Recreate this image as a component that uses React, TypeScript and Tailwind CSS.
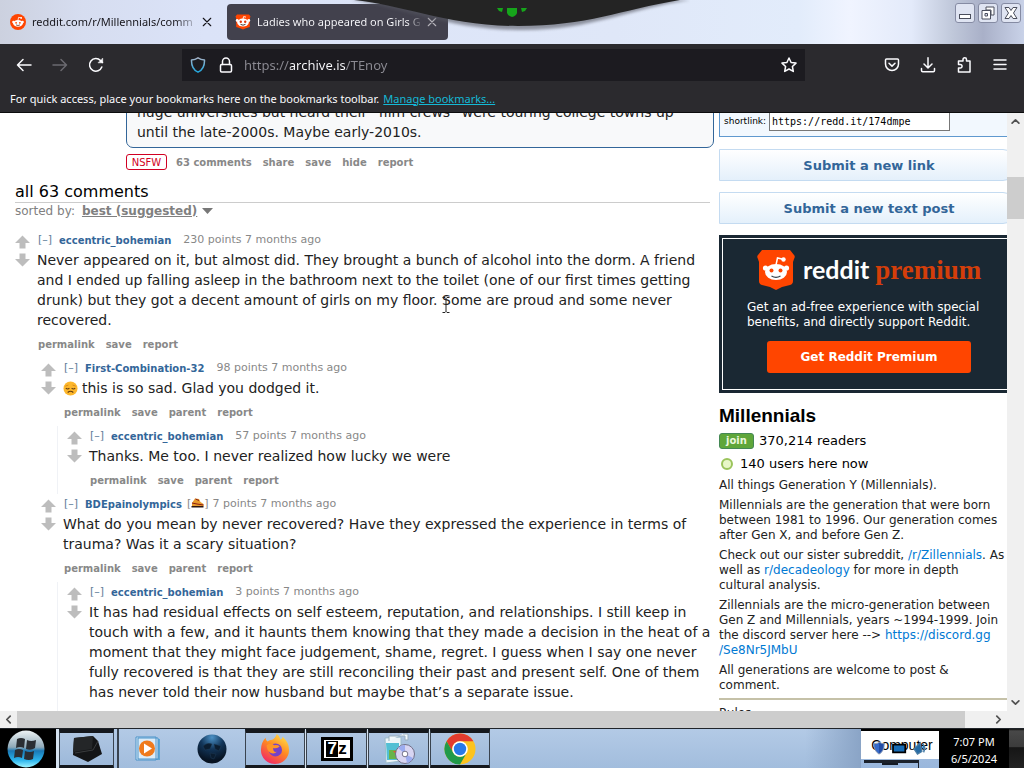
import React from 'react';

type IconProps = { className?: string };

const Snoo = ({ className = 'size-4' }: IconProps) => (
  <svg viewBox="0 0 16 16" className={className} aria-hidden="true">
    <circle cx="8" cy="8" r="8" fill="#ff4500" />
    <ellipse cx="8" cy="9.3" rx="4.9" ry="3.4" fill="#fff" />
    <circle cx="3.4" cy="8" r="1.2" fill="#fff" />
    <circle cx="12.6" cy="8" r="1.2" fill="#fff" />
    <path d="M8 6 8.6 3.3 11 3.8" stroke="#fff" strokeWidth=".8" fill="none" />
    <circle cx="11.2" cy="3.9" r=".9" fill="#fff" />
    <circle cx="6.1" cy="8.8" r=".9" fill="#ff4500" />
    <circle cx="9.9" cy="8.8" r=".9" fill="#ff4500" />
    <path d="M6 10.9q2 1.3 4 0" stroke="#552211" strokeWidth=".7" fill="none" />
  </svg>
);

const SnooShield = () => (
  <svg viewBox="0 0 16 16" className="size-4" aria-hidden="true">
    <path d="M2 .5h12l1.500 2-.7 2V13l-4 1.300L8 15.500l-2.800-1.200L1.200 13V4.500L.5 2.500z" fill="#ff4500" />
    <ellipse cx="8" cy="8.500" rx="5.800" ry="4" fill="#fff" />
    <circle cx="2.200" cy="6.500" r="1.400" fill="#fff" />
    <circle cx="13.800" cy="6.500" r="1.400" fill="#fff" />
    <path d="M8 5 8.600 2.600 11 3.100" stroke="#fff" strokeWidth=".9" fill="none" />
    <circle cx="5.800" cy="7.700" r="1.200" fill="#e0340a" />
    <circle cx="10.200" cy="7.700" r="1.200" fill="#e0340a" />
    <path d="M5.500 10.300q2.500 1.800 5 0" stroke="#33221c" strokeWidth=".9" fill="none" />
  </svg>
);

const Line = ({ children, className = 'size-4', w = 1.5 }: { children: React.ReactNode; className?: string; w?: number }) => (
  <svg viewBox="0 0 16 16" className={className} fill="none" stroke="currentColor" strokeWidth={w} strokeLinecap="round" strokeLinejoin="round" aria-hidden="true">
    {children}
  </svg>
);

const CloseX = () => (
  <Line className="size-3" w={1.5}>
    <path d="M3 3l10 10M13 3 3 13" />
  </Line>
);

const WindowButton = ({ label, children }: { label: string; children: React.ReactNode }) => (
  <button aria-label={label} className="flex h-5 w-5 items-center justify-center rounded-[3px] border border-[#858ba3] bg-[#dfe4f2]">
    <svg viewBox="0 0 16 16" className="size-4" aria-hidden="true">{children}</svg>
  </button>
);

function TabStrip() {
  return (
    <header className="relative flex h-11 shrink-0 items-start overflow-hidden bg-[linear-gradient(90deg,#ccd1df_0%,#d6ddf0_8%,#dbe3f8_20%,#dfe7f8_60%,#e2ecfb_78%,#f0f4ff_83%,#e3eafa_89%,#c0c8da_93%,#a9b0c8_96%,#c9d2e8_100%)]">
      <div className="flex h-11 w-[223px] items-center pl-[10px] text-[#15141a]">
        <Snoo />
        <span className="ml-[6px] w-[168px] overflow-hidden whitespace-nowrap bg-[linear-gradient(90deg,#15141a_85%,transparent)] bg-clip-text text-[11px] text-transparent">reddit.com/r/Millennials/comm</span>
        <button aria-label="Close tab" className="ml-px"><CloseX /></button>
      </div>
      <div className="mt-1 ml-1 flex h-9 w-[221px] items-center rounded-[4px] bg-[#42414d] pl-2 text-[#fbfbfe]">
        <SnooShield />
        <span className="ml-[6px] w-[167px] overflow-hidden whitespace-nowrap bg-[linear-gradient(90deg,#fbfbfe_90%,transparent_99%)] bg-clip-text text-[11px] text-transparent">Ladies who appeared on Girls G</span>
        <button aria-label="Close tab" className="ml-[2px] text-[#b5b3ba]"><CloseX /></button>
      </div>
      <svg viewBox="0 0 340 34" className="absolute top-0 left-[350px] h-[34px] w-[340px]" aria-hidden="true">
        <defs><filter id="soft" x="-5%" y="-20%" width="110%" height="150%"><feGaussianBlur stdDeviation="1.5" /></filter></defs>
        <path d="M0 0C50 6 95 29 168 30S280 8 340 0Z" fill="#555661" opacity=".6" filter="url(#soft)" />
        <path d="M4 0C50 4 98 26 168 26S270 10 330 0Z" fill="#242424" />
        <path d="M147 8h6l-1 4-3-1zM157 8h10v5q-1 3-5 4-4-1-5-4zM171 8h6l-2 3-3 1z" fill="#16a51b" />
      </svg>
      <div className="ml-auto flex gap-[3px] pt-[3px] pr-[3px]">
        <WindowButton label="Minimize"><rect x="2.5" y="9.5" width="11" height="4" fill="#fff" stroke="#4a4e5c" /></WindowButton>
        <WindowButton label="Restore">
          <path d="M6 2h8v8h-3V5H6z" fill="#fff" stroke="#4a4e5c" />
          <path d="M2 5.500h8.500v8.500H2zM5 8.500h2.500V11H5z" fill="#fff" fillRule="evenodd" stroke="#4a4e5c" />
        </WindowButton>
        <WindowButton label="Close"><path d="M2 2.500h4l2 3 2-3h4L10.500 8l3.500 5.500h-4l-2-3-2 3H2L5.500 8z" fill="#fff" stroke="#4a4e5c" /></WindowButton>
      </div>
    </header>
  );
}

function Toolbar() {
  return (
    <div className="shrink-0 bg-[#2b2a2e] text-[#fbfbfe]">
      <div className="flex h-[42px] items-center pl-4">
        <button aria-label="Back"><Line><path d="M15 8H1.500M7 2.500 1.500 8 7 13.500" /></Line></button>
        <button aria-label="Forward" className="ml-5 text-[#6b6a70]"><Line><path d="M1 8h13.500M9 2.500 14.500 8 9 13.500" /></Line></button>
        <button aria-label="Reload" className="ml-5">
          <Line><path d="M13.800 10A6.300 6.300 0 1 1 12.500 3.600L14.500 5.500" /><path d="M14.700 1.500v4.300h-4.300z" fill="currentColor" strokeWidth=".6" /></Line>
        </button>
        <div className="ml-[78px] flex h-8 min-w-0 flex-1 items-center bg-[#1c1b20] px-2">
          <svg viewBox="0 0 16 16" className="size-4 shrink-0" fill="none" aria-hidden="true">
            <defs><linearGradient id="sh" x2="0" y2="1"><stop stopColor="#a5b3c8" /><stop offset="1" stopColor="#1fa7df" /></linearGradient></defs>
            <path d="M8 .8C6 2.200 3.500 2.800 1.500 2.900 1.300 9 3.500 13 8 15.200 12.500 13 14.700 9 14.500 2.900 12.500 2.800 10 2.200 8 .8z" stroke="url(#sh)" strokeWidth="1.500" strokeLinejoin="round" />
          </svg>
          <Line className="ml-3 size-4 shrink-0"><rect x="2.500" y="7.500" width="11" height="7.500" rx="1.200" /><path d="M4.500 7.500V4.500a3.500 3.500 0 0 1 7 0v3" /></Line>
          <input aria-label="Address" defaultValue="https://archive.is/TEnoy" className="ml-[10px] h-6 min-w-0 flex-1 bg-[linear-gradient(90deg,#8c8b93_46px,#fbfbfe_46px,#fbfbfe_102px,#8c8b93_102px)] bg-clip-text text-[13px] text-transparent outline-none" />
          <button aria-label="Bookmark this page"><Line><path d="m8 1 2.100 4.500 4.900.6-3.600 3.400.9 4.900L8 12l-4.300 2.400.9-4.900L1 6.100l4.900-.6z" /></Line></button>
        </div>
        <div className="ml-[79px] flex gap-5 pr-4">
          <button aria-label="Pocket"><Line><path d="M2.500 2h11q1 0 1 1v4a6.500 6.500 0 0 1-13 0V3q0-1 1-1z" /><path d="m5 6.200 3 2.900 3-2.900" /></Line></button>
          <button aria-label="Downloads"><Line><path d="M8 .8v10M4 7l4 4 4-4M1.500 11.500v2q0 1.200 1.200 1.200h10.600q1.200 0 1.200-1.200v-2" /></Line></button>
          <button aria-label="Extensions"><Line><path d="M2.500 15v-4h1.800a1.700 1.700 0 0 0 0-3.500H2.500V4H7V2.500a1.700 1.700 0 0 1 3.500 0V4H14v11z" /></Line></button>
          <button aria-label="Menu"><Line><path d="M2 3h12M2 7.500h12M2 12h12" /></Line></button>
        </div>
      </div>
      <div className="flex h-[27px] items-center border-b border-[#0c0c0d] pl-[10px] text-[11px] whitespace-nowrap">
        For quick access, place your bookmarks here on the bookmarks toolbar.
        <a href="#" className="ml-1 text-[#14b9d6] underline">Manage bookmarks...</a>
      </div>
    </div>
  );
}

const Arrow = ({ down = false }: { down?: boolean }) => (
  <svg viewBox="0 0 15 14" className={down ? 'h-[14px] w-[15px] rotate-180' : 'h-[14px] w-[15px]'} aria-hidden="true">
    <path d="M7.500.5 15 8h-4.500v5.500h-6V8H0z" fill="#bdbdbd" />
  </svg>
);

const SadFace = () => (
  <svg viewBox="0 0 16 16" className="mr-1 inline-block size-[15px] align-[-3px]" role="img" aria-label="disappointed face">
    <circle cx="8" cy="8" r="7.500" fill="#fdb72c" />
    <path d="M2.500 5.500 5.800 4.300M13.500 5.500l-3.300-1.200" stroke="#d98a17" fill="none" />
    <path d="M3 7.800q2 1.400 3.800 0M9.200 7.800q2 1.400 3.800 0M5 12.300q3-2.800 6 0" stroke="#603a10" strokeWidth="1.200" fill="none" />
  </svg>
);

const Shoe = () => (
  <svg viewBox="0 0 13 10" className="inline-block h-[10px] w-[13px] align-[-1px]" role="img" aria-label="hiking boot">
    <path d="M4 .5 8 1l1.500 3 3 2v2H1V5z" fill="#e89a2c" />
    <path d="M1 5 6 6l6.500 1M4.500 1 8 2.500" stroke="#8b1e14" strokeWidth="1" fill="none" />
    <path d="M.5 8h12v1.500H.5z" fill="#2b1510" />
  </svg>
);

const Actions = ({ items }: { items: string[] }) => (
  <div className="flex h-5 items-center gap-[11px] text-[10px] font-bold text-[#888]">
    {items.map((i) => <a href="#" key={i}>{i}</a>)}
  </div>
);

type CommentProps = { user: string; meta: string; flair?: boolean; lines: React.ReactNode[]; indent: string; top?: boolean };

function Comment({ user, meta, flair, lines, indent, top }: CommentProps) {
  return (
    <article className={`flex gap-[7px] pb-1 ${indent}`}>
      <div className="flex w-[15px] shrink-0 flex-col gap-1 pt-[5px]">
        <button aria-label="upvote"><Arrow /></button>
        <button aria-label="downvote"><Arrow down /></button>
      </div>
      <div className="whitespace-nowrap">
        <div className="flex h-5 items-center pl-px text-[11px] text-[#888]">
          <a href="#" className="w-[21px] text-[#5f7d99]">[–]</a>
          <a href="#" className="text-[10px] font-bold text-[#336699]">{user}</a>
          {flair ? <span className="mr-1 ml-[5px]">[<Shoe />]</span> : <span className="w-3" />}
          <span>{meta}</span>
        </div>
        <p className="text-[14px] leading-5 text-[#222]">
          {lines.map((l, i) => <span key={i} className="block">{l}</span>)}
        </p>
        <div className="mt-1 pl-px"><Actions items={top ? ['permalink', 'save', 'report'] : ['permalink', 'save', 'parent', 'report']} /></div>
      </div>
    </article>
  );
}

function Thread() {
  return (
    <main className="relative min-w-0 flex-1">
      <div className="-mt-5 ml-[126px] h-[55px] rounded-[7px] border border-[#369] bg-[#f8f9fa] pt-2 pl-[10px] text-[14px] leading-5 whitespace-nowrap text-[#222]">
        huge universities but heard their “film crews” were touring college towns up<br />until the late-2000s. Maybe early-2010s.
      </div>
      <div className="mt-1 ml-[126px] flex items-center gap-[9px]">
        <span className="flex h-4 w-[41px] items-center justify-center rounded-[3px] border border-[#d10023] text-[10px] text-[#d10023]">NSFW</span>
        <Actions items={['63 comments', 'share', 'save', 'hide', 'report']} />
      </div>
      <div className="mt-2 mr-1 ml-[15px] h-[23px] border-b border-[#ccc] text-[16px] leading-6 text-black">all 63 comments</div>
      <div className="ml-[15px] flex h-4 items-center text-[12px] text-[#808080]">
        sorted by:
        <button className="ml-[7px] flex items-center font-bold"><span className="underline">best (suggested)</span>
          <svg viewBox="0 0 11 6" className="ml-[5px] h-[6px] w-[11px]" aria-hidden="true"><path d="M0 0h11L5.500 6z" fill="#777" /></svg>
        </button>
      </div>
      <div className="mt-[11px]">
        <Comment top indent="pl-[15px]" user="eccentric_bohemian" meta="230 points 7 months ago" lines={['Never appeared on it, but almost did. They brought a bunch of alcohol into the dorm. A friend', 'and I ended up falling asleep in the bathroom next to the toilet (one of our first times getting', 'drunk) but they got a decent amount of girls on my floor. Some are proud and some never', 'recovered.']} />
        <Comment indent="pl-[41px]" user="First-Combination-32" meta="98 points 7 months ago" lines={[<><SadFace />this is so sad. Glad you dodged it.</>]} />
        <div className="ml-[57px] border-l border-[#f0f2f6]"><Comment indent="pl-[9px]" user="eccentric_bohemian" meta="57 points 7 months ago" lines={['Thanks. Me too. I never realized how lucky we were']} /></div>
        <Comment flair indent="pl-[41px]" user="BDEpainolympics" meta="7 points 7 months ago" lines={['What do you mean by never recovered? Have they expressed the experience in terms of', 'trauma? Was it a scary situation?']} />
        <div className="ml-[57px] border-l border-[#f0f2f6]"><Comment indent="pl-[9px]" user="eccentric_bohemian" meta="3 points 7 months ago" lines={['It has had residual effects on self esteem, reputation, and relationships. I still keep in', 'touch with a few, and it haunts them knowing that they made a decision in the heat of a', 'moment that they might face judgement, shame, regret. I guess when I say one never', 'fully recovered is that they are still reconciling their past and present self. One of them', 'has never told their now husband but maybe that’s a separate issue.']} /></div>
      </div>
      <svg viewBox="0 0 8 16" className="absolute top-[184px] left-[442px] h-4 w-2" aria-hidden="true"><path d="M.5.500H3l1 1 1-1h2.500M4 1.500v13M.5 15.500H3l1-1 1 1h2.500" stroke="#222" fill="none" /></svg>
    </main>
  );
}

const SubmitButton = ({ children }: { children: string }) => (
  <button className="mb-[11px] flex h-8 w-full items-center justify-center rounded-r-[16px] border border-[#c4dbf1] bg-linear-to-b from-white to-[#e4f0fb] pt-px text-[13px] font-bold text-[#369]">{children}</button>
);

const PremiumBadge = () => (
  <svg viewBox="0 0 38 40" className="h-10 w-[38px]" aria-hidden="true">
    <path d="M5 0h28l4 5q1.500 1.500 0 4l-1 3v19q0 3-3 4l-8 2-6 3-6-3-8-2q-3-1-3-4V12L1 9Q-.5 6.500 1 5z" fill="#ff4500" />
    <ellipse cx="19" cy="22" rx="11" ry="8" fill="#fff" />
    <circle cx="8.500" cy="18" r="2.600" fill="#fff" /><circle cx="29.500" cy="18" r="2.600" fill="#fff" />
    <path d="M19 15l1.500-7 5.500 1.300" stroke="#fff" strokeWidth="1.500" fill="none" />
    <circle cx="26.500" cy="9.500" r="2.200" fill="#fff" />
    <circle cx="14.500" cy="20.500" r="2" fill="#ff4500" /><circle cx="23.500" cy="20.500" r="2" fill="#ff4500" />
    <path d="M14.500 26q4.500 2.600 9 0" stroke="#33424c" strokeWidth="1.200" fill="none" />
  </svg>
);

function Sidebar() {
  return (
    <aside className="w-[293px] shrink-0 overflow-hidden pl-[5px]">
      <div className="w-[300px]">
        <div className="flex h-6 items-start border-b border-l border-[#5f99cf] bg-[#f2f8fe] pl-1">
          <label htmlFor="shortlink" className="w-[45px] text-[9px] leading-[16px] text-black">shortlink:</label>
          <input id="shortlink" readOnly defaultValue="https://redd.it/174dmpe" className="-mt-px h-[19px] w-[181px] border border-[#777] bg-white px-[2px] font-['DejaVu_Sans_Mono',monospace] text-[10px] text-black" />
        </div>
        <div className="mt-3">
          <SubmitButton>Submit a new link</SubmitButton>
          <SubmitButton>Submit a new text post</SubmitButton>
        </div>
        <section className="mt-[11px] h-[158px] bg-[#1a2833] p-[3px]">
          <div className="h-full border border-white pt-[11px] text-white">
            <div className="flex h-10 items-center pl-[34px]">
              <PremiumBadge />
              <span className="ml-2 font-[Lato,sans-serif] text-[25px] font-bold">reddit</span>
              <span className="ml-[6px] font-['Liberation_Serif',serif] text-[27px] font-bold text-[#d43e0a]">premium</span>
            </div>
            <p className="mt-[10px] pl-6 text-[12px] leading-[15px] whitespace-nowrap">Get an ad-free experience with special<br />benefits, and directly support Reddit.</p>
            <button className="mt-[11px] ml-11 h-8 w-[204px] rounded-[3px] bg-[#ff4500] text-[12px] font-bold">Get Reddit Premium</button>
          </div>
        </section>
        <h1 className="mt-[11px] font-['Liberation_Sans',sans-serif] text-[19px] leading-[24px] font-bold text-black">Millennials</h1>
        <div className="mt-[3px] flex h-5 items-center text-[13px] text-black">
          <button className="mr-[5px] h-4 w-[35px] rounded-[3px] border border-[#485] bg-[#5fa63a] text-[10px] leading-[14px] font-bold text-[#eaf7de]">join</button>
          370,214 readers
        </div>
        <div className="mt-[3px] flex h-5 items-center pl-[2px] text-[13px] text-black">
          <span className="mr-[7px] size-3 rounded-full border-2 border-[#9bc45c] bg-[#e8f7c8]" />140 users here now
        </div>
        <div className="mt-1 flex flex-col gap-[5px] text-[12px] leading-[15px] whitespace-nowrap text-[#222]">
          <p>All things Generation Y (Millennials).</p>
          <p>Millennials are the generation that were born<br />between 1981 to 1996. Our generation comes<br />after Gen X, and before Gen Z.</p>
          <p>Check out our sister subreddit, <a href="#" className="text-[#0079d3]">/r/Zillennials</a>. As<br />well as <a href="#" className="text-[#0079d3]">r/decadeology</a> for more in depth<br />cultural analysis.</p>
          <p>Zillennials are the micro-generation between<br />Gen Z and Millennials, years ~1994-1999. Join<br />the discord server here --&gt; <a href="#" className="text-[#0079d3]">https://discord.gg<br />/Se8Nr5JMbU</a></p>
          <p>All generations are welcome to post &amp;<br />comment.</p>
        </div>
        <hr className="mt-[5px] border-t-2 border-[#c5c1a8]" />
        <p className="mt-[6px] text-[12px] leading-[15px] text-[#222]">Rules</p>
      </div>
    </aside>
  );
}

const Chevron = ({ d }: { d: string }) => (
  <Line className="size-[9px]" w={3}><path d={d} /></Line>
);

function VerticalBar() {
  return (
    <div className="flex w-[17px] shrink-0 flex-col items-center bg-[#f0f0f0] text-[#505050]">
      <button aria-label="Scroll up" className="flex h-[17px] items-center"><Chevron d="M2 11l6-6 6 6" /></button>
      <div className="mt-[47px] h-[42px] w-full bg-[#cdcdcd]" />
      <button aria-label="Scroll down" className="mt-auto flex h-[17px] items-center"><Chevron d="M2 5l6 6 6-6" /></button>
    </div>
  );
}

function HorizontalBar() {
  return (
    <div className="flex h-[17px] shrink-0 bg-[#f0f0f0] pr-[17px] text-[#505050]">
      <button aria-label="Scroll left" className="flex w-[17px] items-center justify-center"><Chevron d="M11 2 5 8l6 6" /></button>
      <div className="flex-1 bg-[#cdcdcd]" />
      <button aria-label="Scroll right" className="ml-[25px] flex w-[17px] items-center justify-center"><Chevron d="M5 2l6 6-6 6" /></button>
    </div>
  );
}

const Task = ({ label, open = false, width, children }: { label: string; open?: boolean; width: string; children: React.ReactNode }) => (
  <button aria-label={label} className={`flex h-10 shrink-0 items-center justify-center ${width} ${open ? 'border-x border-t-4 border-b-4 border-x-[#39434f] border-y-[#15181d] bg-linear-to-b from-[#afc6e2] to-[#9db9da]' : ''}`}>
    {children}
  </button>
);

function Taskbar() {
  return (
    <footer className="flex h-10 shrink-0 overflow-hidden border-t border-[#20242a] bg-linear-to-b from-[#b3cae6] to-[#a2bddd]">
      <button aria-label="Start" className="flex h-10 w-[56px] items-center justify-center bg-black pr-1">
        <svg viewBox="0 0 38 38" className="size-[38px]" aria-hidden="true">
          <defs><linearGradient id="orb" x2="0" y2="1"><stop stopColor="#eef3f5" /><stop offset=".45" stopColor="#8fa9b8" /><stop offset=".55" stopColor="#1a78b4" /><stop offset=".8" stopColor="#2bb4ec" /><stop offset="1" stopColor="#9ff4ff" /></linearGradient></defs>
          <circle cx="19" cy="19" r="18.500" fill="url(#orb)" />
          <path d="M10 9q4-2 8 0l-1 9q-4-2-8 0zM20 10q4 2 9 0l-1 8q-4 3-9 1zM8 20q4-2 8 0l-1 8q-4-2-8 0zM18 21q5 2 9 0l-1 8q-4 2-9 0z" fill="#2b2e33" />
        </svg>
      </button>
      <div className="flex gap-px bg-[#d5e2f0] pl-[3px]">
        <Task label="Computer" open width="w-[55px]">
          <svg viewBox="0 0 32 28" className="h-7 w-8" aria-hidden="true"><path d="M3 3 22 1l5 5 4 13-14 8L2 20z" fill="#141517" /><path d="m3 3 19-2-1 13-19 3z" fill="#242628" /><path d="m4 18 18-3 5-9" stroke="#3a3c3e" fill="none" /></svg>
        </Task>
      </div>
      <div className="ml-[3px] flex border-l-2 border-[#39434f]">
        <Task label="Media player" width="w-[60px]">
          <svg viewBox="0 0 28 26" className="h-[26px] w-7" aria-hidden="true"><path d="M5 3h20v21H5z" fill="#5ea6d5" /><path d="M3 2h20v21H3zM1 1h20v23H1z" fill="#dcecf8" stroke="#4b93c9" /><circle cx="12" cy="12.500" r="8" fill="#ef7a1c" /><path d="M9 7.500v10l8-5z" fill="#fff" /></svg>
        </Task>
        <Task label="Globe" width="w-[66px]">
          <svg viewBox="0 0 30 30" className="size-[30px]" aria-hidden="true"><defs><radialGradient id="gl" cy=".1" r=".8"><stop stopColor="#4b91c6" /><stop offset=".5" stopColor="#123559" /><stop offset="1" stopColor="#071322" /></radialGradient></defs><circle cx="15" cy="15" r="14.500" fill="url(#gl)" /><path d="M6 12q4-4 9-2l-2 5-5 1zM17 10l7 2-2 5-4-2zM13 19l6 1-2 5-3-1z" fill="#0b1d30" stroke="#23415d" strokeWidth=".4" /></svg>
        </Task>
      </div>
      <div className="flex gap-px bg-[#d5e2f0]">
        <Task label="Firefox" open width="w-[60px]">
          <svg viewBox="0 0 32 32" className="size-[30px] shrink-0" aria-hidden="true"><defs><linearGradient id="ff" x1=".8" y1="0" x2=".2" y2="1"><stop stopColor="#ffe14a" /><stop offset=".45" stopColor="#ff8a22" /><stop offset="1" stopColor="#f0206a" /></linearGradient></defs><path d="M18 0q3 2 4 6 2-1 2-3 7 6 7 14a15 15 0 0 1-30 0Q1 9 6 4q0 3 2 4 2-2 5-2 3-1 5-6z" fill="url(#ff)" /><circle cx="16.500" cy="17" r="7" fill="#7641c8" /><path d="M7 12q5-3 8 0 3-1 6 1-2 3-7 2 0 5 4 4-3 3-7 1-4-3-4-8z" fill="#ff9428" /></svg>
        </Task>
        <Task label="7-Zip" open width="w-[61px]">
          <span className="flex h-6 w-8 items-center justify-center border-[3px] border-black bg-white font-['Liberation_Sans',sans-serif] text-[17px] font-bold text-black"><span className="flex h-4 w-3 items-center justify-center bg-black text-white">7</span>z</span>
        </Task>
        <Task label="Installer" open width="w-[61px]">
          <svg viewBox="0 0 32 32" className="size-8 shrink-0" aria-hidden="true"><path d="M2 5 18 4v24L3 30z" fill="#edf5f9" stroke="#9dbccb" /><path d="M3 10h13v17H4z" fill="#52bfd4" /><path d="M6 17h9v9H6z" fill="#67b44b" /><path d="M10 18h5v5z" fill="#e9572b" /><path d="M6 8V3h16v4h3V1h-5" fill="#f3f9fc" stroke="#9aafbd" /><circle cx="22" cy="21" r="9.500" fill="#d8d5f2" stroke="#706e86" /><path d="M22 21 15 15a9 9 0 0 1 7-3zM22 21l8 4a9 9 0 0 1-6 5z" fill="#9cacf0" /><circle cx="22" cy="21" r="2.800" fill="#fff" stroke="#77758c" /></svg>
        </Task>
        <Task label="Chrome" open width="w-[60px]">
          <svg viewBox="0 0 32 32" className="size-8 shrink-0" aria-hidden="true"><circle cx="16" cy="16" r="15.500" fill="#fcc31e" /><path d="M2.600 8.200A15.500 15.500 0 0 1 29.400 8.200H16a7.800 7.800 0 0 0-6.800 11.700z" fill="#e33b2e" /><path d="M2.600 8.200A15.500 15.500 0 0 0 16 31.500l6.800-11.700a7.800 7.800 0 0 1-13.500 0z" fill="#219a4a" /><circle cx="16" cy="16" r="7.800" fill="#fff" /><circle cx="16" cy="16" r="6.200" fill="#2879e8" /></svg>
        </Task>
      </div>
      <div className="flex-1 bg-[linear-gradient(90deg,transparent_85%,#8aa4c6_100%)]" />
      <div className="relative w-[78px] bg-linear-to-b from-[#aac3e1] to-[#9ab7dc]">
        <div className="flex h-[30px] items-center justify-center border-t-2 border-black bg-white pl-1 font-['Liberation_Sans',sans-serif] text-[14px] text-black">Computer</div>
        <div className="mt-px ml-[3px] h-[9px] w-[55px] border-t-[3px] border-r border-[#1c222b] pl-[18px]"><div className="h-[2px] w-4 bg-[#151b24]" /></div>
        <svg viewBox="0 0 62 16" className="absolute top-3 left-2 h-[14px] w-[62px]" aria-hidden="true">
          <path d="M1 3q6 0 6-2 2 2 6 2 0 9-6 12Q1 11 1 3z" fill="#3669c9" stroke="#8b98aa" /><path d="M7 2q3 1 5 2 0 7-5 10z" fill="#234da4" />
          <path d="M23 4h14v9H23z" fill="#176bb5" stroke="#000" strokeWidth="2" />
          <path d="M47 9l7-7 2 10-5 3zM57 3q4 4 1 10" fill="#266ba5" stroke="#4a7da5" strokeWidth="1.500" />
        </svg>
      </div>
      <div className="flex w-[70px] flex-col items-center bg-black pt-1 text-[11px] leading-[17px] text-white"><span>7:07 PM</span><span>6/5/2024</span></div>
      <button aria-label="Show desktop" className="w-[15px] bg-[linear-gradient(180deg,#111_0%,#484848_5%,#3c3c3c_45%,#161616_48%,#222_100%)]" />
    </footer>
  );
}

export default function App() {
  return (
    <div className="flex h-screen flex-col overflow-hidden bg-white font-['Noto_Sans',sans-serif]">
      <TabStrip />
      <Toolbar />
      <div className="flex min-h-0 flex-1 overflow-hidden font-['DejaVu_Sans',sans-serif]">
        <Thread />
        <Sidebar />
        <VerticalBar />
      </div>
      <HorizontalBar />
      <Taskbar />
    </div>
  );
}
